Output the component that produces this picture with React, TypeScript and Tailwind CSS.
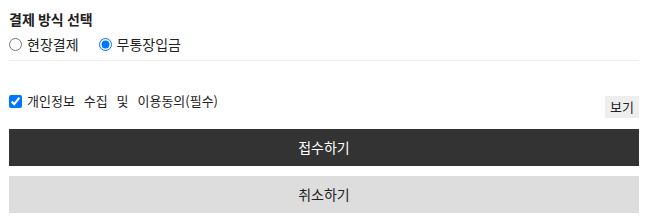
import React from 'react';

const App: React.FC = () => {
    return (
        <div className="w-[648px] bg-white px-[9px] pt-[9px] text-[#222] font-['Noto_Sans_CJK_KR','Noto_Sans',sans-serif]">
            <div className="border-b border-[#eee] pb-[6px]">
                <div className="h-[20px] text-[14px] font-bold leading-[20px]">결제 방식 선택</div>
                <div className="flex items-center gap-[20px] h-[20px] text-[14px] leading-[20px] mt-[5px]">
                    <label className="flex items-center gap-[5px]">
                        <input type="radio" name="pay" className="m-0 w-[13px] h-[13px]" />
                        현장결제
                    </label>
                    <label className="flex items-center gap-[5px]">
                        <input type="radio" name="pay" defaultChecked className="m-0 w-[13px] h-[13px]" />
                        무통장입금
                    </label>
                </div>
            </div>
            <div className="flex items-start justify-between mt-[31px]">
                <label className="flex items-center gap-[5px] h-[18px] text-[13px] leading-[18px] [word-spacing:6px]">
                    <input type="checkbox" defaultChecked className="m-0 w-[13px] h-[13px]" />
                    개인정보 수집 및 이용동의(필수)
                </label>
                <button className="mt-[4px] bg-[#eee] h-[22px] px-[5px] text-[13px] leading-[22px]">보기</button>
            </div>
            <div className="flex flex-col gap-[10px] mt-[11px]">
                <button className="h-[37px] bg-[#333] text-white text-[14px]">접수하기</button>
                <button className="h-[37px] bg-[#ddd] text-[#222] text-[14px]">취소하기</button>
            </div>
        </div>
    );
};

export default App;
